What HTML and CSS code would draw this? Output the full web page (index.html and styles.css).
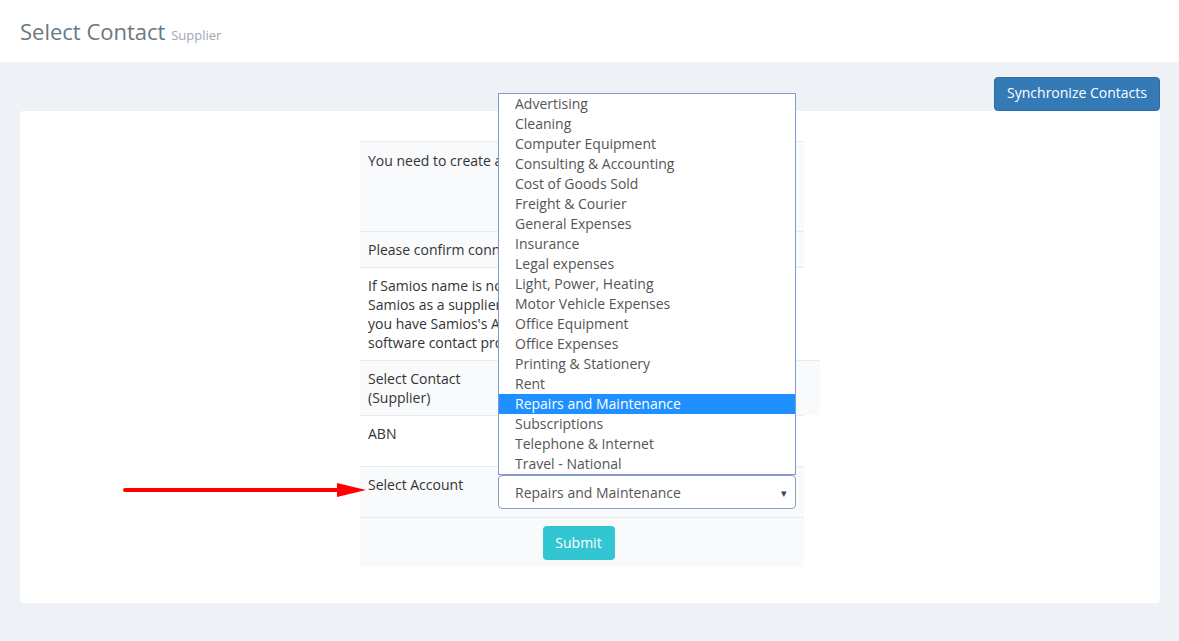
FILE: index.html
```html
<!DOCTYPE html>
<html>
<head>
    <title>Select Contact</title>
    <link rel="stylesheet" href="styles.css">
</head>
<body>
    <div class="page-head">
        <h1>Select Contact <small>Supplier</small></h1>
    </div>

    <div class="page-body">
        <div class="actions">
            <button class="btn-sync">Synchronize Contacts</button>
        </div>

        <div class="card">
            <div class="setup">
                <div class="row shaded first">
                    <div class="cell-full">You need to create a contact for Samios first.</div>
                </div>
                <div class="row shaded">
                    <div class="cell-full">Please confirm connection details below.</div>
                </div>
                <div class="row">
                    <div class="cell-full lines">
                        <span>If Samios name is not in the list below, please add</span>
                        <span>Samios as a supplier in your accounting software.</span>
                        <span>you have Samios's ABN entered in your accounting</span>
                        <span>software contact profile.</span>
                    </div>
                </div>
                <div class="row shaded wide">
                    <div class="label">Select Contact (Supplier)</div>
                    <div class="value"></div>
                </div>
                <div class="row">
                    <div class="label">ABN</div>
                    <div class="value"><div class="field"></div></div>
                </div>
                <div class="row shaded">
                    <div class="label">Select Account</div>
                    <div class="value">
                        <div class="select-wrap">
                            <ul class="options">
                                <li>Advertising</li>
                                <li>Cleaning</li>
                                <li>Computer Equipment</li>
                                <li>Consulting &amp; Accounting</li>
                                <li>Cost of Goods Sold</li>
                                <li>Freight &amp; Courier</li>
                                <li>General Expenses</li>
                                <li>Insurance</li>
                                <li>Legal expenses</li>
                                <li>Light, Power, Heating</li>
                                <li>Motor Vehicle Expenses</li>
                                <li>Office Equipment</li>
                                <li>Office Expenses</li>
                                <li>Printing &amp; Stationery</li>
                                <li>Rent</li>
                                <li class="active">Repairs and Maintenance</li>
                                <li>Subscriptions</li>
                                <li>Telephone &amp; Internet</li>
                                <li>Travel - National</li>
                            </ul>
                            <div class="select">
                                <span>Repairs and Maintenance</span>
                                <span class="caret">&#9662;</span>
                            </div>
                        </div>
                    </div>
                </div>
                <div class="row shaded submit-row">
                    <button class="btn-submit">Submit</button>
                </div>
            </div>

            <svg class="pointer" width="244" height="18" viewBox="0 0 244 18">
                <line x1="2" y1="9" x2="218" y2="9" stroke="#ff0000" stroke-width="4" stroke-linecap="round"/>
                <polygon points="214,2 243,9 214,16" fill="#ff0000"/>
            </svg>
        </div>
    </div>
</body>
</html>
```

FILE: styles.css
```css
body {
    margin: 0;
    background-color: #eef1f5;
    color: #333;
    font-family: "Open Sans", Arial, sans-serif;
    font-size: 14px;
}

.page-head {
    background-color: #fff;
    height: 62px;
    padding: 0 20px;
    box-sizing: border-box;
}

.page-head h1 {
    margin: 0;
    padding-top: 16px;
    font-size: 22px;
    font-weight: 400;
    color: #697882;
    line-height: 30px;
}

.page-head small {
    font-size: 13px;
    color: #a0a9b4;
}

.page-body {
    padding: 15px 19px 38px 20px;
}

.actions {
    display: flex;
    justify-content: flex-end;
}

.btn-sync {
    background-color: #337ab7;
    color: #fff;
    border: 1px solid #2e6da4;
    border-radius: 4px;
    font-family: "Open Sans", Arial, sans-serif;
    font-size: 14px;
    height: 34px;
    padding: 0 12px 3px 12px;
    width: 166px;
}

.card {
    position: relative;
    background-color: #fff;
    border-radius: 4px;
    padding: 30px 0 36px 340px;
}

.setup {
    width: 444px;
    line-height: 19px;
}

.row {
    display: flex;
    border-top: 1px solid #e7ecf1;
    background-color: #fff;
}

.row.shaded {
    background-color: #f9fafc;
}

.row.wide {
    width: 460px;
}

.row.first {
    height: 89px;
}

.row.first .cell-full {
    padding-top: 9px;
}

/* long texts run on under the open list, so they stop at its edge */
.cell-full {
    width: 130px;
    padding: 8px 0 8px 8px;
    white-space: nowrap;
    overflow: hidden;
}

.cell-full.lines span {
    display: block;
}

.label {
    flex: 0 0 138px;
    box-sizing: border-box;
    padding: 8px 16px 8px 8px;
}

.value {
    flex: 1;
    padding: 8px 8px 8px 0;
}

.field {
    height: 34px;
    border: 1px solid #c2cad8;
    border-radius: 4px;
    box-sizing: border-box;
}

.select-wrap {
    position: relative;
}

.select {
    display: flex;
    justify-content: space-between;
    align-items: center;
    height: 34px;
    box-sizing: border-box;
    border: 1px solid #8b9cc6;
    border-radius: 4px;
    padding: 0 8px 0 16px;
    color: #555;
    background-color: #fff;
}

.caret {
    font-size: 11px;
    color: #444;
}

.options {
    position: absolute;
    left: 0;
    right: 0;
    bottom: 100%;
    margin: 0;
    padding: 0;
    list-style: none;
    background-color: #fff;
    border: 1px solid #7f9bd2;
    color: #555;
    line-height: 20px;
}

.options li {
    padding: 0 16px;
}

.options li.active {
    background-color: #1e90ff;
    color: #fff;
}

.submit-row {
    justify-content: center;
    padding: 8px 7px 7px 0;
}

.btn-submit {
    background-color: #32c5d2;
    color: #fff;
    border: none;
    border-radius: 4px;
    font-family: "Open Sans", Arial, sans-serif;
    font-size: 14px;
    height: 34px;
    width: 72px;
    padding-bottom: 2px;
}

.pointer {
    position: absolute;
    left: 103px;
    top: 370px;
}
```
